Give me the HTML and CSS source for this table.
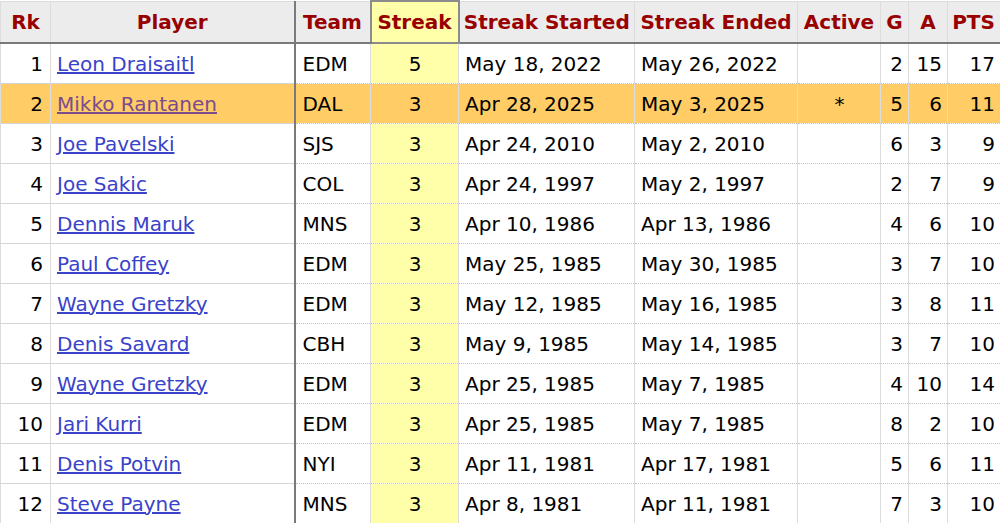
FILE: index.html
```
<!DOCTYPE html>
<html>
<head>
<meta charset="utf-8">
<link rel="stylesheet" href="styles.css">
</head>
<body>
<table class="stats">
<colgroup>
<col class="c-rk"><col class="c-player"><col class="c-team"><col class="c-streak"><col class="c-start"><col class="c-end"><col class="c-active"><col class="c-g"><col class="c-a"><col class="c-pts">
</colgroup>
<thead>
<tr>
<th class="rk">Rk</th><th class="player">Player</th><th class="team">Team</th><th class="streak">Streak</th><th>Streak Started</th><th>Streak Ended</th><th>Active</th><th>G</th><th>A</th><th class="pts">PTS</th>
</tr>
</thead>
<tbody>
<tr><td class="rk">1</td><td class="player"><a href="#">Leon Draisaitl</a></td><td class="team">EDM</td><td class="streak">5</td><td class="left">May 18, 2022</td><td class="left">May 26, 2022</td><td class="center"></td><td class="num">2</td><td class="num">15</td><td class="num pts">17</td></tr>
<tr class="hl"><td class="rk">2</td><td class="player"><a class="visited" href="#">Mikko Rantanen</a></td><td class="team">DAL</td><td class="streak">3</td><td class="left">Apr 28, 2025</td><td class="left">May 3, 2025</td><td class="center">*</td><td class="num">5</td><td class="num">6</td><td class="num pts">11</td></tr>
<tr><td class="rk">3</td><td class="player"><a href="#">Joe Pavelski</a></td><td class="team">SJS</td><td class="streak">3</td><td class="left">Apr 24, 2010</td><td class="left">May 2, 2010</td><td class="center"></td><td class="num">6</td><td class="num">3</td><td class="num pts">9</td></tr>
<tr><td class="rk">4</td><td class="player"><a href="#">Joe Sakic</a></td><td class="team">COL</td><td class="streak">3</td><td class="left">Apr 24, 1997</td><td class="left">May 2, 1997</td><td class="center"></td><td class="num">2</td><td class="num">7</td><td class="num pts">9</td></tr>
<tr><td class="rk">5</td><td class="player"><a href="#">Dennis Maruk</a></td><td class="team">MNS</td><td class="streak">3</td><td class="left">Apr 10, 1986</td><td class="left">Apr 13, 1986</td><td class="center"></td><td class="num">4</td><td class="num">6</td><td class="num pts">10</td></tr>
<tr><td class="rk">6</td><td class="player"><a href="#">Paul Coffey</a></td><td class="team">EDM</td><td class="streak">3</td><td class="left">May 25, 1985</td><td class="left">May 30, 1985</td><td class="center"></td><td class="num">3</td><td class="num">7</td><td class="num pts">10</td></tr>
<tr><td class="rk">7</td><td class="player"><a href="#">Wayne Gretzky</a></td><td class="team">EDM</td><td class="streak">3</td><td class="left">May 12, 1985</td><td class="left">May 16, 1985</td><td class="center"></td><td class="num">3</td><td class="num">8</td><td class="num pts">11</td></tr>
<tr><td class="rk">8</td><td class="player"><a href="#">Denis Savard</a></td><td class="team">CBH</td><td class="streak">3</td><td class="left">May 9, 1985</td><td class="left">May 14, 1985</td><td class="center"></td><td class="num">3</td><td class="num">7</td><td class="num pts">10</td></tr>
<tr><td class="rk">9</td><td class="player"><a href="#">Wayne Gretzky</a></td><td class="team">EDM</td><td class="streak">3</td><td class="left">Apr 25, 1985</td><td class="left">May 7, 1985</td><td class="center"></td><td class="num">4</td><td class="num">10</td><td class="num pts">14</td></tr>
<tr><td class="rk">10</td><td class="player"><a href="#">Jari Kurri</a></td><td class="team">EDM</td><td class="streak">3</td><td class="left">Apr 25, 1985</td><td class="left">May 7, 1985</td><td class="center"></td><td class="num">8</td><td class="num">2</td><td class="num pts">10</td></tr>
<tr><td class="rk">11</td><td class="player"><a href="#">Denis Potvin</a></td><td class="team">NYI</td><td class="streak">3</td><td class="left">Apr 11, 1981</td><td class="left">Apr 17, 1981</td><td class="center"></td><td class="num">5</td><td class="num">6</td><td class="num pts">11</td></tr>
<tr><td class="rk">12</td><td class="player"><a href="#">Steve Payne</a></td><td class="team">MNS</td><td class="streak">3</td><td class="left">Apr 8, 1981</td><td class="left">Apr 11, 1981</td><td class="center"></td><td class="num">7</td><td class="num">3</td><td class="num pts">10</td></tr>
</tbody>
</table>
</body>
</html>
```

FILE: styles.css
```
html, body {
  margin: 0;
  padding: 0;
  background: #fff;
}
body {
  overflow: hidden;
  font-family: "DejaVu Sans", Verdana, sans-serif;
  font-size: 20px;
  color: #000;
}
.stats {
  border-collapse: collapse;
  table-layout: fixed;
  width: 1004px;
}
.c-rk { width: 50px; }
.c-player { width: 244px; }
.c-team { width: 76px; }
.c-streak { width: 88px; }
.c-start { width: 176px; }
.c-end { width: 163px; }
.c-active { width: 83px; }
.c-g { width: 28px; }
.c-a { width: 39px; }
.c-pts { width: 57px; }

.stats th {
  background: #ececec;
  color: #990000;
  font-weight: bold;
  height: 40px;
  padding: 0 3px;
  text-align: center;
  white-space: nowrap;
  border-left: 1px solid #dcdcdc;
  border-right: 1px solid #dcdcdc;
  border-top: 1px solid #dcdcdc;
  border-bottom: 2px solid #7a7a7a;
  overflow: hidden;
}
.stats th.streak {
  background: #ffffaa;
  border: 2px solid #8c8c8c;
}
.stats th.pts {
  padding-right: 8px;
}
.stats td {
  height: 39px;
  padding: 0 5px 0 6px;
  white-space: nowrap;
  border-left: 1px solid #dcdcdc;
  border-right: 1px solid #dcdcdc;
  border-bottom: 1px dotted #c4c4c4;
  overflow: hidden;
}
.stats td.rk,
.stats td.player {
  border-bottom: 1px solid #d6d6d6;
}
.stats .player {
  border-right: 2px solid #7a7a7a;
}
.stats td.rk {
  text-align: right;
  padding-right: 7px;
}
.stats td.player {
  padding-left: 6px;
}
.stats td.team {
  padding-left: 7px;
}
.stats td.streak {
  text-align: center;
  background: #ffffaa;
}
.stats td.left {
  text-align: left;
}
.stats td.center {
  text-align: center;
}
.stats td.num {
  text-align: right;
  padding-right: 5px;
  padding-left: 2px;
}
.stats td.pts {
  padding-right: 9px;
}
.stats tr.hl td,
.stats tr.hl td.streak {
  background: #ffcc66;
}
.stats a {
  color: #3a43c9;
  text-decoration: underline;
}
.stats a.visited {
  color: #7b4b8e;
}
```
